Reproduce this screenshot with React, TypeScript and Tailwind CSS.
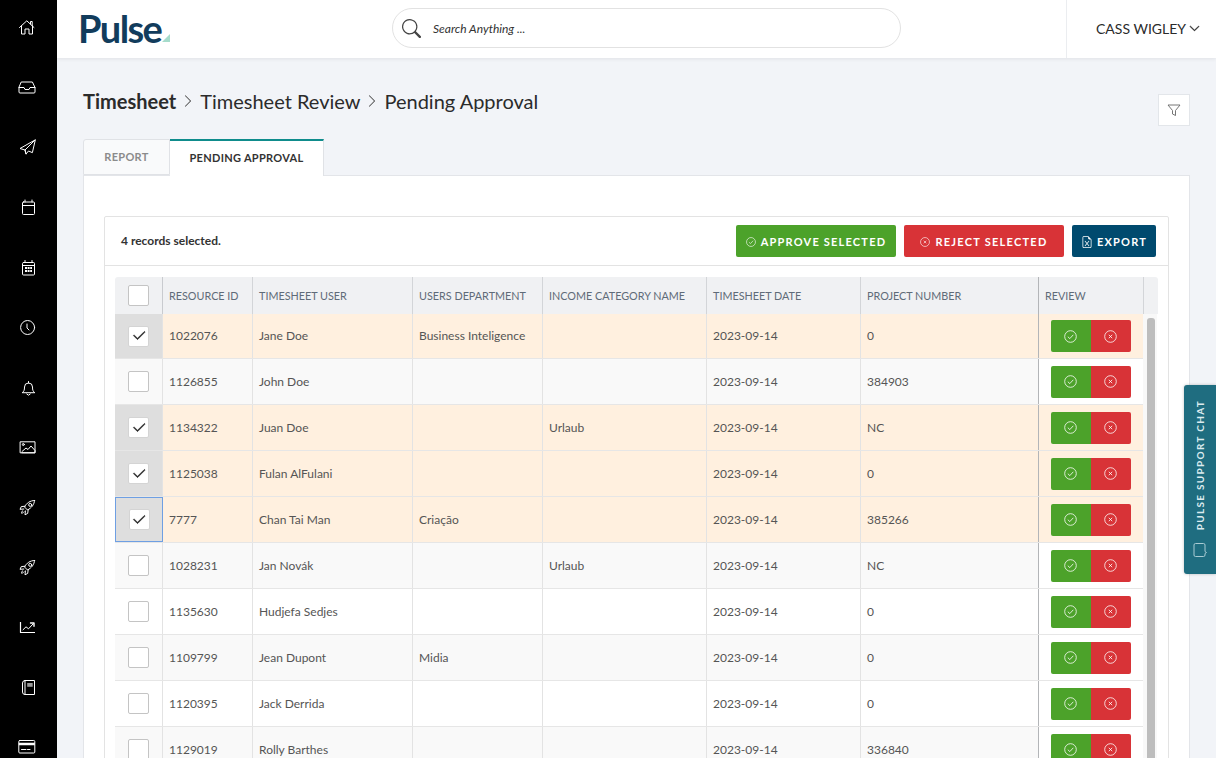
import React from "react";
import { BsFileEarmarkExcel, BsChevronDown, BsChevronRight, BsCheck2, BsSearch } from "react-icons/bs";

const rows = [
  { id: "1022076", user: "Jane Doe", dept: "Business Inteligence", cat: "", proj: "0", sel: true, bg: "", h: "h-[45px]" },
  { id: "1126855", user: "John Doe", dept: "", cat: "", proj: "384903", sel: false, bg: "bg-[#f9f9f9]", h: "h-[46px]" },
  { id: "1134322", user: "Juan Doe", dept: "", cat: "Urlaub", proj: "NC", sel: true, bg: "", h: "h-[46px]" },
  { id: "1125038", user: "Fulan AlFulani", dept: "", cat: "", proj: "0", sel: true, bg: "", h: "h-[46px]" },
  { id: "7777", user: "Chan Tai Man", dept: "Criação", cat: "", proj: "385266", sel: true, bg: "", focus: true, h: "h-[46px]" },
  { id: "1028231", user: "Jan Novák", dept: "", cat: "Urlaub", proj: "NC", sel: false, bg: "bg-[#f9f9f9]", h: "h-[46px]" },
  { id: "1135630", user: "Hudjefa Sedjes", dept: "", cat: "", proj: "0", sel: false, bg: "bg-white", h: "h-[46px]" },
  { id: "1109799", user: "Jean Dupont", dept: "Midia", cat: "", proj: "0", sel: false, bg: "bg-[#f9f9f9]", h: "h-[46px]" },
  { id: "1120395", user: "Jack Derrida", dept: "", cat: "", proj: "0", sel: false, bg: "bg-white", h: "h-[46px]" },
  { id: "1129019", user: "Rolly Barthes", dept: "", cat: "", proj: "336840", sel: false, bg: "bg-[#f9f9f9]", h: "h-[46px]" },
];

const Nav = ({ children }: { children: React.ReactNode }) => (
  <svg width="20" height="20" viewBox="0 0 20 20" fill="none" stroke="white" strokeWidth="1" strokeLinejoin="round" strokeLinecap="round">{children}</svg>
);

const rocket = (
  <>
    <path d="M17.5 3.5C13 3.6 9.6 6 7.5 10l3 3c4-2.1 6.9-5.5 7-9.5z" />
    <path d="M8 9.2l-3.7.4L3 12.3l3.8-.3M11.2 12.6l-.5 3.8L8 17.8l.4-3.9" />
    <circle cx="13.2" cy="7.9" r="1.5" />
    <path d="M5.8 13.6c-1 .8-1.3 1.8-1.3 2.6.9 0 1.8-.4 2.5-1.3" />
  </>
);

const navIcons: React.ReactNode[] = [
  <><path d="M2.5 10.5L9.8 3.8l7.2 6.7M13.5 7V4.5h1.7v4" /><path d="M4.5 9v8H8v-5h4v5h3.5V9" /></>,
  <><path d="M4.6 5h10.8L18 10.5V15a1 1 0 0 1-1 1H3a1 1 0 0 1-1-1v-4.500z" /><path d="M2 10.500h5l1 2h4l1-2h5" /></>,
  <><path d="M18 3L3 11.500l5 1.500 1 4 2.500-3 3.500 1.500z" /><path d="M18 3L8 13l1 4" /></>,
  <><rect x="5.500" y="5" width="12" height="12.500" rx="1" /><path d="M5.500 8.500h12M8 3v2M15 3v2" /></>,
  <><rect x="5.500" y="5.500" width="12" height="12.500" rx="1" /><path d="M5.500 8.500h12M8 3.500v2M15 3.500v2" /><path d="M8 11h7M8 14h7" strokeWidth="2" strokeDasharray="2 .6" strokeLinecap="butt" /></>,
  <><circle cx="10.600" cy="10.500" r="7" /><path d="M10 7v4l2 2" /></>,
  <><path d="M5.500 15.500c1.500-1 2-2.500 2-5.500a4 4 0 0 1 8 0c0 3 .5 4.500 2 5.500z" /><path d="M11.500 6V4.500M9.800 17l1.700 1.200 1.700-1.200" /></>,
  <><rect x="3.500" y="4.800" width="14.500" height="11" /><circle cx="6.300" cy="7.500" r="1" /><path d="M5 14.500l4-3.500 2 1.500 3-3.500 4 4.500V15.800H5" /></>,
  rocket,
  rocket,
  <><path d="M3.500 5v10.500H18" strokeWidth="1.200" strokeLinecap="butt" /><path d="M6 12.800l3-3 2.500 2 4.500-4.800" /><path d="M13.500 6H17v3.300" strokeWidth="1.400" /></>,
  <><path d="M8 3.500h9.500v14H8A2.500 2.500 0 0 1 5.500 15V6A2.500 2.500 0 0 1 8 3.500z" /><path d="M8 3.500v14" /><rect x="10.200" y="6" width="5.500" height="3.800" fill="#999" stroke="none" /></>,
  <><rect x="1.800" y="3.500" width="16" height="12.500" rx="1" /><path d="M1.800 7h16" strokeWidth="2.500" strokeLinecap="butt" /><path d="M4.500 12.500H9M10.500 12.500H13" /></>,
];

const CheckC = ({ s = 13 }: { s?: number }) => (
  <svg width={s} height={s} viewBox="0 0 13 13" fill="none" stroke="currentColor" strokeWidth="0.8"><circle cx="6.500" cy="6.500" r="5.800" /><path d="M3.800 6.700l2 1.900 3.500-3.800" /></svg>
);
const CrossC = ({ s = 13 }: { s?: number }) => (
  <svg width={s} height={s} viewBox="0 0 13 13" fill="none" stroke="currentColor" strokeWidth="0.8"><circle cx="6.500" cy="6.500" r="5.800" /><path d="M4.800 4.800l3.400 3.400M8.200 4.800l-3.400 3.400" /></svg>
);

const headers = ["RESOURCE ID", "TIMESHEET USER", "USERS DEPARTMENT", "INCOME CATEGORY NAME", "TIMESHEET DATE", "PROJECT NUMBER"];
const colW = ["w-[90px]", "w-[160px]", "w-[130px]", "w-[164px]", "w-[154px]", "w-[178px]"];

function Box({ checked }: { checked: boolean }) {
  return (
    <div className={`w-[21px] h-[21px] bg-white rounded-[2px] border flex items-center justify-center ${checked ? "border-[#d4d4d4]" : "border-[#c4c4c4]"}`}>
      {checked && <BsCheck2 className="text-[16px] text-[#222] [stroke-width:0.6] stroke-[#222]" />}
    </div>
  );
}

function Cell({ w, children, strong }: { w: string; children?: React.ReactNode; strong?: boolean }) {
  return (
    <div className={`${w} shrink-0 h-full flex items-center pl-[6px] text-[12px] text-[#555] border-r ${strong ? "border-[#b3b5b8]" : "border-[#e3e3e3]"}`}>
      {children}
    </div>
  );
}

export default function App() {
  return (
    <div className="w-[1216px] h-[758px] overflow-hidden flex bg-[#f2f4f8] font-['Lato','Liberation_Sans',sans-serif] relative">
      <aside className="w-[57px] shrink-0 bg-black flex flex-col items-center gap-[6px] pr-[3px]">
        {navIcons.map((n, i) => (
          <div key={i} className="h-[54px] shrink-0 flex items-center justify-center">
            <Nav>{n}</Nav>
          </div>
        ))}
      </aside>
      <div className="flex-1 min-w-0 flex flex-col">
        <header className="h-[58px] shrink-0 bg-white shadow-[0_1px_4px_rgba(0,0,0,0.08)] flex items-center relative z-10 pb-[2px]">
          <div className="w-[335px] shrink-0 pl-[21px] flex items-end h-[28px]">
            <span className="text-[38px] leading-[28px] h-[28px] font-bold text-[#123c5c] tracking-[-1.6px]">Pulse</span>
            <svg width="8" height="8" viewBox="0 0 8 8" className="ml-[1px] shrink-0"><polygon points="8,0 8,8 0,8" fill="#a6dccb" /></svg>
          </div>
          <div className="w-[509px] h-[40px] shrink-0 rounded-full border border-[#e2e2e2] flex items-center pl-[9px] gap-[12px]">
            <BsSearch className="text-[19px] text-[#444]" />
            <span className="text-[12px] italic text-[#333] pt-[2px]">Search Anything ...</span>
          </div>
          <div className="ml-[165px] h-[58px] -mb-[2px] border-l border-[#ebedf0] flex-1 flex items-center pl-[29px] pb-[2px] gap-[3px]">
            <span className="text-[14px] text-[#2b2b2b]">CASS WIGLEY</span>
            <BsChevronDown className="text-[11px] text-[#2b2b2b] [stroke-width:0.8] stroke-[#2b2b2b]" />
          </div>
        </header>
        <main className="flex-1 min-h-0 px-[26px] overflow-hidden">
          <div className="flex items-center h-[32px] mt-[27px]">
            <h1 className="text-[20px] font-bold text-[#2b2b2b]">Timesheet</h1>
            <BsChevronRight className="text-[14px] text-[#444] mx-[5px]" />
            <span className="text-[20px] text-[#2b2b2b]">Timesheet Review</span>
            <BsChevronRight className="text-[14px] text-[#444] mx-[5px]" />
            <span className="text-[20px] text-[#2b2b2b]">Pending Approval</span>
            <div className="ml-auto w-[32px] h-[32px] mt-[18px] bg-white border border-[#e3e6ea] flex items-center justify-center">
              <svg width="14" height="14" viewBox="0 0 14 14" fill="none" stroke="#666" strokeWidth="0.9" strokeLinejoin="round"><path d="M1 2h12L8.500 7.500v5l-3-1.500V7.500z" /></svg>
            </div>
          </div>
          <div className="flex mt-[22px] h-[37px] relative z-[1]">
            <div className="w-[87px] h-[36px] bg-[#f9fafb] border border-[#e0e2e6] rounded-tl-[3px] flex items-center justify-center text-[11px] font-bold tracking-[0.3px] text-[#8b8b8b]">REPORT</div>
            <div className="w-[154px] h-[37px] bg-white border-t-2 border-t-[#0f8c8c] border-r border-r-[#e0e2e6] flex items-center justify-center text-[11px] font-bold tracking-[0.3px] text-[#333]">PENDING APPROVAL</div>
          </div>
          <section className="-mt-px h-[600px] bg-white border border-[#e3e5e9] pt-[40px] px-[20px]">
            <div className="h-[560px] border border-[#e3e3e3] rounded-[2px]">
              <div className="h-[49px] border-b border-[#e3e3e3] flex items-center pl-[16px] pr-[12px] gap-[8px]">
                <span className="text-[12px] font-bold text-[#333] mr-auto">4 records selected.</span>
                <button className="w-[160px] h-[32px] pt-[2px] bg-[#4ca22a] rounded-[2px] text-white text-[11px] font-bold tracking-[1.2px] flex items-center justify-center gap-[5px]"><CheckC s={10} />APPROVE SELECTED</button>
                <button className="w-[160px] h-[32px] pt-[2px] bg-[#d83337] rounded-[2px] text-white text-[11px] font-bold tracking-[1.25px] flex items-center justify-center gap-[5px]"><CrossC s={10} />REJECT SELECTED</button>
                <button className="w-[84px] h-[32px] pt-[2px] bg-[#004a6e] rounded-[2px] text-white text-[11px] font-bold tracking-[1.2px] flex items-center justify-center gap-[4px]"><BsFileEarmarkExcel className="text-[12px]" />EXPORT</button>
              </div>
              <div className="mx-[10px] mt-[11px]">
                <div className="h-[37px] bg-[#f0f1f3] rounded-t-[3px] flex items-center text-[10.8px] text-[#5f6b78]">
                  <div className="w-[48px] h-full shrink-0 border-r border-[#c9cbcf] flex items-center justify-center"><Box checked={false} /></div>
                  {headers.map((h, i) => (
                    <div key={h} className={`${colW[i]} h-full shrink-0 flex items-center pl-[6px] pt-[2px] border-r ${i === 5 ? "border-[#b3b5b8]" : "border-[#d3d5d8]"}`}>{h}</div>
                  ))}
                  <div className="w-[105px] h-full shrink-0 flex items-center pl-[6px] pt-[2px] border-r border-[#d3d5d8]">REVIEW</div>
                </div>
                <div className="flex">
                  <div className="w-[1028px] shrink-0">
                    {rows.map((r) => (
                      <div key={r.id} className={`${r.h} flex border-b border-[#e6e6e6] ${r.sel ? "bg-[#fff0df]" : r.bg}`}>
                        <div className={`w-[48px] shrink-0 h-full flex items-center justify-center ${r.sel ? "bg-[#dedede]" : ""} ${r.focus ? "border border-[#6e9fe3]" : "border-r border-r-[#e3e3e3]"}`}>
                          <Box checked={r.sel} />
                        </div>
                        <Cell w={colW[0]}>{r.id}</Cell>
                        <Cell w={colW[1]}>{r.user}</Cell>
                        <Cell w={colW[2]}>{r.dept}</Cell>
                        <Cell w={colW[3]}>{r.cat}</Cell>
                        <Cell w={colW[4]}>2023-09-14</Cell>
                        <Cell w={colW[5]} strong>{r.proj}</Cell>
                        <div className={`flex-1 h-full flex items-center justify-center ${r.sel ? "" : "bg-white"}`}>
                          <div className="flex w-[80px] h-[32px] rounded-[2px] overflow-hidden text-white">
                            <div className="w-[40px] bg-[#4ca22a] flex items-center justify-center pr-[2px]"><CheckC /></div>
                            <div className="w-[40px] bg-[#d83337] flex items-center justify-center pr-[2px]"><CrossC /></div>
                          </div>
                        </div>
                      </div>
                    ))}
                  </div>
                  <div className="w-[14px] shrink-0 bg-[#f8f8f8] pl-[4px] pt-[4px]">
                    <div className="w-[8px] h-[460px] bg-[#bdbdbd] rounded-t-[3px]" />
                  </div>
                </div>
              </div>
            </div>
          </section>
        </main>
      </div>
      <div className="absolute left-[1184px] top-[385px] w-[32px] h-[189px] bg-[#1f6d80] rounded-l-[3px] flex flex-col items-center justify-end pb-[16px] gap-[12px] shadow-[0_0_3px_rgba(0,0,0,0.25)]">
        <span className="[writing-mode:vertical-rl] rotate-180 text-[10px] font-bold tracking-[1.3px] text-[#dcebef]">PULSE SUPPORT CHAT</span>
        <svg width="16" height="16" viewBox="0 0 16 16" fill="none" stroke="#a9cbd3" strokeWidth="1"><path d="M3.500 1.500h8a1.500 1.500 0 0 1 1.500 1.500v6.500l1.500 1-1.500 1v1.500a1.500 1.500 0 0 1-1.500 1.500h-8A1.500 1.500 0 0 1 2 13V3a1.500 1.500 0 0 1 1.500-1.500z" /></svg>
      </div>
    </div>
  );
}
